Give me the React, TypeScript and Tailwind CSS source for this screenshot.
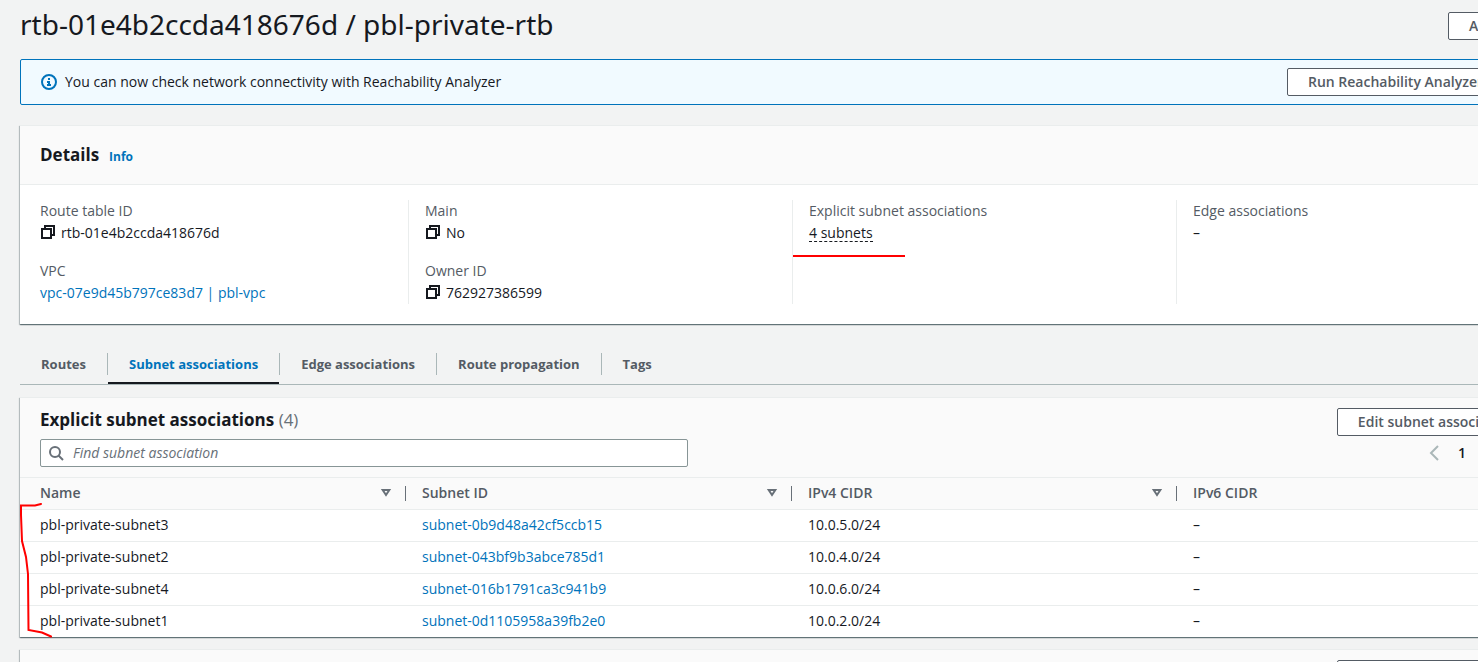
import React from "react";

type Subnet = { name: string; id: string; cidr: string };

const SUBNETS: Subnet[] = [
  { name: "pbl-private-subnet3", id: "subnet-0b9d48a42cf5ccb15", cidr: "10.0.5.0/24" },
  { name: "pbl-private-subnet2", id: "subnet-043bf9b3abce785d1", cidr: "10.0.4.0/24" },
  { name: "pbl-private-subnet4", id: "subnet-016b1791ca3c941b9", cidr: "10.0.6.0/24" },
  { name: "pbl-private-subnet1", id: "subnet-0d1105958a39fb2e0", cidr: "10.0.2.0/24" },
];

const TABS = ["Routes", "Subnet associations", "Edge associations", "Route propagation", "Tags"];

function CopyIcon() {
  return (
    <svg width="16" height="16" viewBox="0 0 16 16" fill="none" stroke="#16191f" strokeWidth="2" aria-hidden="true">
      <path d="M2 4h9v9H2z" />
      <path d="M5 4V1h9v9h-3" />
    </svg>
  );
}

function InfoIcon() {
  return (
    <svg width="16" height="16" viewBox="0 0 16 16" fill="none" stroke="#0073bb" strokeWidth="2" aria-hidden="true">
      <circle cx="8" cy="8" r="7" />
      <path d="M8 11V8H6M10 11H6M8 6V4" />
    </svg>
  );
}

function SearchIcon() {
  return (
    <svg width="16" height="16" viewBox="0 0 16 16" fill="none" stroke="#687078" strokeWidth="2" aria-hidden="true">
      <circle cx="7" cy="7" r="5" />
      <path d="M15 15l-4.5-4.5" />
    </svg>
  );
}

function SortIcon() {
  return (
    <svg width="16" height="16" viewBox="0 0 16 16" fill="none" stroke="#687078" strokeWidth="2" aria-hidden="true">
      <path d="M4.700 5h6.600L8 10z" />
    </svg>
  );
}

function Button({ children }: { children: React.ReactNode }) {
  return (
    <button
      type="button"
      className="flex h-7 shrink-0 items-center rounded-xs border border-[#545b64] bg-white px-5 font-semibold whitespace-nowrap text-[#545b64]"
    >
      {children}
    </button>
  );
}

function Panel({ children }: { children: React.ReactNode }) {
  return (
    <section className="relative border-t border-[#eaeded] bg-white shadow-[0_1px_1px_0_rgba(0,28,36,0.4),-1px_1px_1px_0_rgba(0,28,36,0.2),1px_1px_1px_0_rgba(0,28,36,0.15)]">
      {children}
    </section>
  );
}

function Field({ label, children }: { label: string; children: React.ReactNode }) {
  return (
    <div>
      <dt className="text-[#545b64]">{label}</dt>
      <dd className="flex items-center gap-[5px]">{children}</dd>
    </div>
  );
}

function Column({ first, children }: { first?: boolean; children: React.ReactNode }) {
  return (
    <dl
      className={
        first ? "relative flex flex-col gap-4 pl-4" : "relative flex flex-col gap-4 border-l border-[#eaeded] pl-4"
      }
    >
      {children}
    </dl>
  );
}

function HeaderCell({ label, width, first }: { label: string; width: string; first?: boolean }) {
  return (
    <th scope="col" className={`${width} p-0 text-left font-semibold text-[#545b64]`}>
      <div className={first ? "flex items-center pl-5" : "flex items-center pl-4"}>
        <span className="grow">{label}</span>
        <button type="button" aria-label={`Sort by ${label}`} className="mr-[11px]">
          <SortIcon />
        </button>
        <span className="h-[15px] w-px bg-[#687078]" />
      </div>
    </th>
  );
}

export default function App() {
  return (
    <div className="h-screen overflow-hidden bg-[#f2f3f3] font-['Open_Sans','Noto_Sans',sans-serif] text-[14px] leading-[22px] text-[#16191f]">
      <main className="-mr-[78px] pt-[6px] pl-5">
        <header className="flex items-start justify-between pb-[17px]">
          <h1 className="font-['Noto_Sans',sans-serif] text-[28px] leading-9">rtb-01e4b2ccda418676d / pbl-private-rtb</h1>
          <div className="pt-[6px]">
            <Button>
              Actions
              <svg width="16" height="16" viewBox="0 0 16 16" fill="#545b64" aria-hidden="true">
                <path d="M4 5h8l-4 6z" />
              </svg>
            </Button>
          </div>
        </header>

        <div className="flex items-center gap-2 rounded-xs border border-[#0073bb] bg-[#f1faff] py-2 pr-[7px] pl-5">
          <InfoIcon />
          <p className="grow">You can now check network connectivity with Reachability Analyzer</p>
          <Button>Run Reachability Analyzer</Button>
          <button type="button" aria-label="Dismiss" className="mx-[10px]">
            <svg width="16" height="16" viewBox="0 0 16 16" stroke="#545b64" strokeWidth="2" aria-hidden="true">
              <path d="M2 2l12 12M14 2L2 14" />
            </svg>
          </button>
        </div>

        <div className="mt-5">
          <Panel>
            <div className="flex items-baseline gap-[10px] border-b border-[#eaeded] bg-[#fafafa] px-5 py-[18px]">
              <h2 className="text-[17px] font-bold">Details</h2>
              <a href="#info" className="text-xs font-bold text-[#0073bb]">
                Info
              </a>
            </div>
            <div className="-mr-1 ml-1 grid grid-cols-4 pt-[15px] pb-5">
              <Column first>
                <Field label="Route table ID">
                  <CopyIcon />
                  rtb-01e4b2ccda418676d
                </Field>
                <Field label="VPC">
                  <a href="#vpc" className="text-[#0073bb]">
                    vpc-07e9d45b797ce83d7 | pbl-vpc
                  </a>
                </Field>
              </Column>
              <Column>
                <Field label="Main">
                  <CopyIcon />
                  No
                </Field>
                <Field label="Owner ID">
                  <CopyIcon />
                  762927386599
                </Field>
              </Column>
              <Column>
                <Field label="Explicit subnet associations">
                  <span className="flex h-[22px] items-center">
                    <button type="button" className="border-b border-dashed border-[#16191f] leading-4">
                      4 subnets
                    </button>
                  </span>
                </Field>
                <svg className="absolute top-[54px] left-0" width="113" height="4" viewBox="0 0 113 4" aria-hidden="true">
                  <path d="M0 2h112" stroke="#f00" strokeWidth="2" />
                </svg>
              </Column>
              <Column>
                <Field label="Edge associations">–</Field>
              </Column>
            </div>
          </Panel>
        </div>

        <nav className="mt-[22px] flex border-b border-[#aab7b8] text-[13px] font-bold text-[#545b64]">
          {TABS.map((tab, i) => (
            <div key={tab} className="flex items-start pt-[7px]">
              <button
                type="button"
                className={
                  tab === "Subnet associations"
                    ? "border-b-2 border-[#16191f] px-[21px] pb-[7px] text-[#0073bb]"
                    : "border-b-2 border-transparent px-[21px] pb-[7px]"
                }
              >
                {tab}
              </button>
              {i < TABS.length - 1 && <span className="h-[22px] w-px bg-[#aab7b8]" />}
            </div>
          ))}
        </nav>

        <div className="mt-3">
          <Panel>
            <div className="border-b border-[#eaeded] bg-[#fafafa] pr-[14px] pb-[10px] pl-5">
              <div className="flex items-start justify-between">
                <h2 className="pt-[11px] text-[17px] font-bold">
                  Explicit subnet associations <span className="font-normal text-[#687078]">(4)</span>
                </h2>
                <div className="pt-[10px]">
                  <Button>Edit subnet associations</Button>
                </div>
              </div>
              <div className="mt-[3px] flex items-center justify-between">
                <label className="flex h-7 w-[648px] items-center gap-[9px] rounded-xs border border-[#879596] bg-white pl-[7px]">
                  <SearchIcon />
                  <input
                    type="text"
                    aria-label="Find subnet association"
                    placeholder="Find subnet association"
                    className="grow outline-none placeholder:text-[#687078] placeholder:italic"
                  />
                </label>
                <div className="flex items-center gap-4 pr-3">
                  <button type="button" aria-label="Previous page">
                    <svg width="16" height="16" viewBox="0 0 16 16" fill="none" stroke="#aab7b8" strokeWidth="2" aria-hidden="true">
                      <path d="M12 1L5 8l7 7" />
                    </svg>
                  </button>
                  <span className="font-semibold">1</span>
                  <button type="button" aria-label="Next page">
                    <svg width="16" height="16" viewBox="0 0 16 16" fill="none" stroke="#aab7b8" strokeWidth="2" aria-hidden="true">
                      <path d="M4 1l7 7-7 7" />
                    </svg>
                  </button>
                  <button type="button" aria-label="Preferences">
                    <svg width="16" height="16" viewBox="0 0 16 16" fill="none" stroke="#545b64" strokeWidth="2" aria-hidden="true">
                      <circle cx="8" cy="8" r="5" />
                      <circle cx="8" cy="8" r="1" />
                    </svg>
                  </button>
                </div>
              </div>
            </div>
            <table className="w-full table-fixed border-collapse">
              <thead>
                <tr className="h-[31px] border-b border-[#eaeded] bg-[#fafafa]">
                  <HeaderCell label="Name" width="w-[386px]" first />
                  <HeaderCell label="Subnet ID" width="w-[386px]" />
                  <HeaderCell label="IPv4 CIDR" width="w-[385px]" />
                  <HeaderCell label="IPv6 CIDR" width="w-auto" />
                </tr>
              </thead>
              <tbody>
                {SUBNETS.map((s) => (
                  <tr key={s.id} className="h-8 border-b border-[#eaeded] last:border-b-0">
                    <td className="p-0 pl-5">{s.name}</td>
                    <td className="p-0 pl-4">
                      <a href={`#${s.id}`} className="text-[#0073bb]">
                        {s.id}
                      </a>
                    </td>
                    <td className="p-0 pl-4">{s.cidr}</td>
                    <td className="p-0 pl-4">–</td>
                  </tr>
                ))}
              </tbody>
            </table>
            <svg
              className="absolute top-[105px] left-0"
              width="34"
              height="136"
              viewBox="20 504 34 136"
              fill="none"
              stroke="#f00"
              strokeWidth="2"
              strokeLinecap="round"
              aria-hidden="true"
            >
              <path d="M41 505L35 506.500H21V516L22 542L26 558L28 575L28.500 631L42 633.500L51 637.500" />
            </svg>
          </Panel>
        </div>

        <div className="mt-3">
          <Panel>
            <div className="flex justify-end bg-[#fafafa] py-[10px] pr-[14px] pl-5">
              <Button>Edit subnet associations</Button>
            </div>
          </Panel>
        </div>
      </main>
    </div>
  );
}
